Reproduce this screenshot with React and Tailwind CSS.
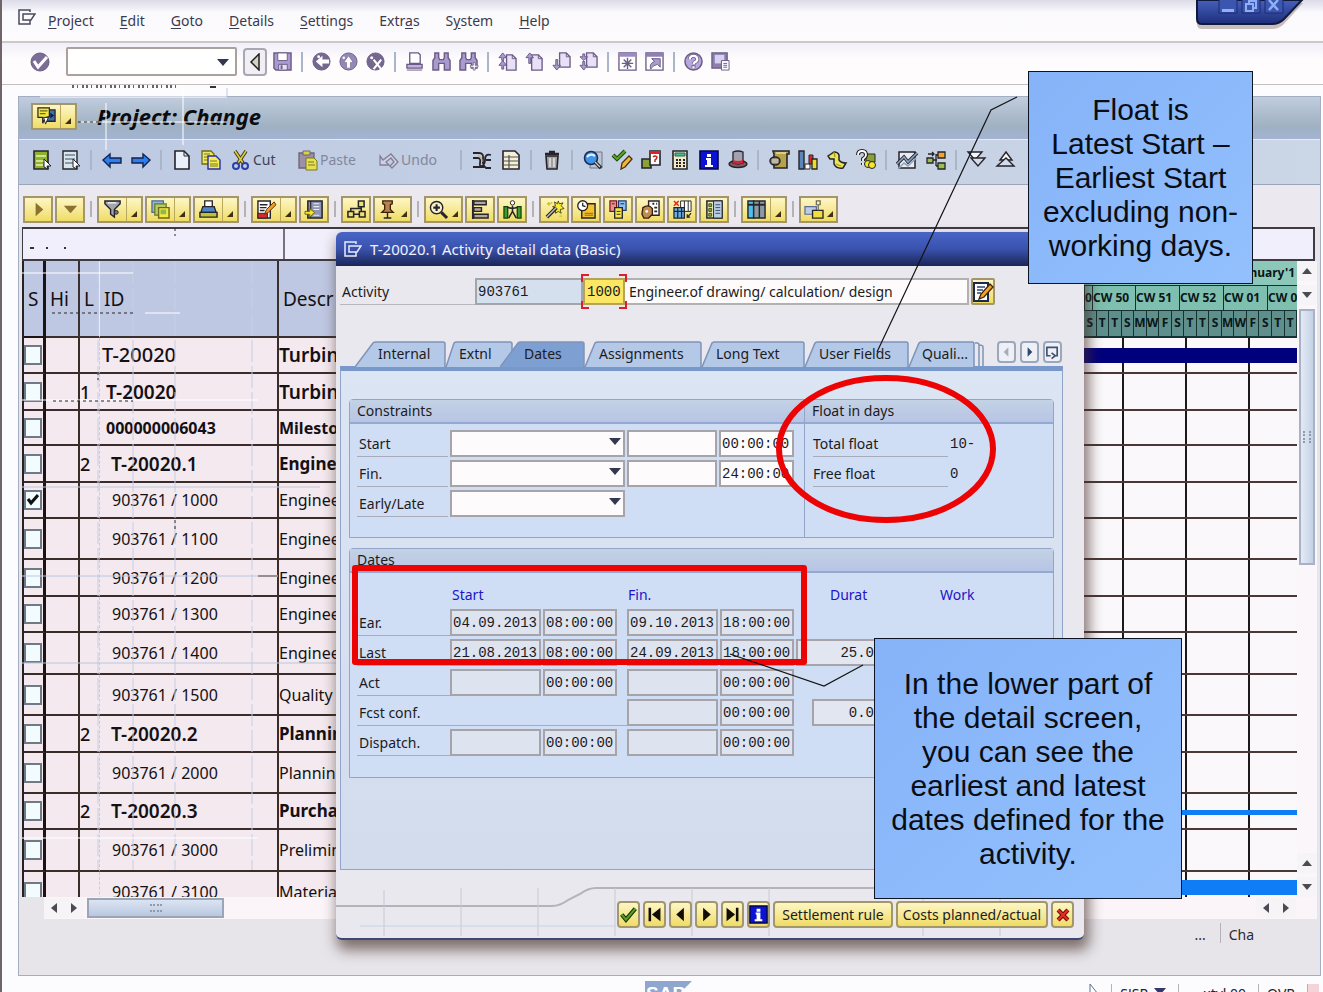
import { Fragment } from "react"

// ---------- icons ----------

const K = "#26242a"
const P = "#6b5b85"
const PL = "#bdb2e2"

const glyphs = {
  check: (
    <>
      <circle cx="10" cy="10" r="9" fill="#7b6e96" stroke={P} />
      <path d="M4 9l4 6 9-10" fill="none" stroke="#fff" strokeWidth="3" />
    </>
  ),
  save: (
    <>
      <path d="M1 1h18v18H3l-2-2z" fill="#a99bd0" stroke={P} strokeWidth="1.5" />
      <path d="M5 1h10v8H5z" fill="#fff" stroke={P} />
      <path d="M6 13h9v6H6z" fill="#e6e0f5" stroke={P} />
      <path d="M8 14h2v4H8z" fill={P} />
    </>
  ),
  back: (
    <>
      <circle cx="10" cy="10" r="9" fill="#75688f" stroke={P} />
      <path d="M18 8h-7V4l-7 6 7 6v-4h7z" fill="#fff" />
      <circle cx="7" cy="5" r="1.5" fill="#fff" />
    </>
  ),
  exit: (
    <>
      <circle cx="10" cy="10" r="9" fill="#9488b8" stroke={P} />
      <path d="M8 17v-6H5l5-7 5 7h-3v6z" fill="#fff" stroke={P} strokeWidth="0.6" />
      <circle cx="5" cy="6" r="1.3" fill="#fff" />
    </>
  ),
  cancel: (
    <>
      <circle cx="10" cy="10" r="9" fill="#75688f" stroke={P} />
      <path d="M8 8l8 10M16 8l-8 10" stroke="#fff" strokeWidth="2.2" />
      <circle cx="6" cy="6" r="1.6" fill="#fff" />
    </>
  ),
  print: (
    <>
      <path d="M5 1h9l2 2v9H5z" fill="#fff" stroke={P} strokeWidth="1.4" />
      <path d="M2 13h16v4H2z" fill={PL} stroke={P} strokeWidth="1.4" />
      <path d="M2 19h16" stroke={P} />
    </>
  ),
  find: (
    <path d="M3 1h4v5l1 2h4l1-2V1h4v5l2 3v10h-6v-7H7v7H1V9l2-3z" fill="#a99bd0" stroke={P} strokeWidth="1.5" />
  ),
  findNext: (
    <>
      <path d="M3 1h4v5l1 2h4l1-2V1h4v5l2 3v8h-6v-5H7v7H1V9l2-3z" fill="#a99bd0" stroke={P} strokeWidth="1.5" />
      <path d="M12 14h3v-3h2v3h3v2h-3v3h-2v-3h-3z" fill="#fff" stroke={P} strokeWidth="0.8" />
    </>
  ),
  firstPage: (
    <>
      <path d="M9 3h6l4 4v12H9z" fill="#e7e0f7" stroke={P} strokeWidth="1.4" />
      <path d="M15 3v4h4" fill="none" stroke={P} />
      <path d="M1 6l4-5 4 5H6v3H4V6zM1 14l4-5 4 5H6v4H4v-4z" fill="#a99bd0" stroke={P} />
    </>
  ),
  prevPage: (
    <>
      <path d="M7 3h7l4 4v12H7z" fill="#e7e0f7" stroke={P} strokeWidth="1.4" />
      <path d="M14 3v4h4" fill="none" stroke={P} />
      <path d="M1 6l4-5 4 5H6v6H4V6z" fill="#a99bd0" stroke={P} />
    </>
  ),
  nextPage: (
    <>
      <path d="M8 1h7l4 4v11H8z" fill="#e7e0f7" stroke={P} strokeWidth="1.4" />
      <path d="M15 1v4h4" fill="none" stroke={P} />
      <path d="M4 8h2v6h3l-4 5-4-5h3z" fill="#a99bd0" stroke={P} />
    </>
  ),
  lastPage: (
    <>
      <path d="M8 1h7l4 4v11H8z" fill="#e7e0f7" stroke={P} strokeWidth="1.4" />
      <path d="M15 1v4h4" fill="none" stroke={P} />
      <path d="M4 2h2v3h3L5 9 1 5h3zM4 10h2v4h3l-4 5-4-5h3z" fill="#a99bd0" stroke={P} />
    </>
  ),
  session: (
    <>
      <path d="M1 1h18v18H1z" fill="#fff" stroke={P} strokeWidth="1.4" />
      <path d="M1 1h18v4H1z" fill="#9a8cc2" />
      <path d="M10 6v12M4 12h12M6 8l8 8M14 8l-8 8" stroke={P} strokeWidth="1.5" />
    </>
  ),
  shortcut: (
    <>
      <path d="M1 1h18v18H1z" fill="#fff" stroke={P} strokeWidth="1.4" />
      <path d="M1 1h18v4H1z" fill="#8e80b4" />
      <path d="M7 7h9v9l-3-3q-5 1-7 5-2-6 4-8z" fill="#a99bd0" stroke={P} />
    </>
  ),
  help: (
    <>
      <circle cx="10" cy="10" r="9" fill="#b5a8dc" stroke={P} strokeWidth="1.6" />
      <path d="M6 8q0-4 4-4t4 4q0 2-3 3l-1 2M10 14v3" fill="none" stroke={P} strokeWidth="4" />
      <path d="M6 8q0-4 4-4t4 4q0 2-3 3l-1 2M10 15v2" fill="none" stroke="#fff" strokeWidth="2.4" />
    </>
  ),
  layout: (
    <>
      <path d="M1 1h16v16H1z" fill="#8c7fae" stroke={P} strokeWidth="1.4" />
      <path d="M4 3h10v9H4z" fill="#d8d0f0" />
      <path d="M11 9h8v10h-8z" fill="#fff" stroke={P} />
      <path d="M13 12h4M13 14h4M13 16h4" stroke={P} />
    </>
  ),
  selectAll: (
    <>
      <path d="M2 1h14v18H2z" fill="#8db32c" stroke={K} strokeWidth="1.6" />
      <path d="M4 6h10M4 11h10M4 15h7" stroke="#e9f2b4" strokeWidth="1.6" />
      <path d="M12 9l7 7h-4l1 3-4-2z" fill="#fff" stroke={K} />
    </>
  ),
  deselect: (
    <>
      <path d="M2 1h14v18H2z" fill="#d8e4ee" stroke={K} strokeWidth="1.4" />
      <path d="M4 5h10M4 9h10M4 13h8" stroke="#6f7f90" strokeWidth="1.3" />
      <path d="M12 9l7 7h-4l1 3-4-2z" fill="#fff" stroke={K} />
    </>
  ),
  left: <path d="M1 10l7-6v4h11v5H8v4z" fill="#2d7ff0" stroke="#14224e" strokeWidth="1.4" />,
  right: <path d="M19 10l-7-6v4H1v5h11v4z" fill="#2d7ff0" stroke="#14224e" strokeWidth="1.4" />,
  page: (
    <>
      <path d="M3 1h9l5 5v13H3z" fill="#eaf1fa" stroke={K} strokeWidth="1.6" />
      <path d="M12 1v5h5" fill="none" stroke={K} />
    </>
  ),
  copy: (
    <>
      <path d="M1 1h9l3 3v10H1z" fill="#ece765" stroke="#6d6a1c" strokeWidth="1.3" />
      <path d="M3 4h6M3 7h4M3 10h4" stroke="#7d7920" />
      <path d="M7 6h8l4 4v9H7z" fill="#f3ec54" stroke="#2a2fa8" strokeWidth="1.4" />
      <path d="M9 11h7M9 14h8M9 16h8" stroke="#7d7920" />
    </>
  ),
  cut: (
    <>
      <path d="M4 1l8 12M15 1L7 13" stroke="#3d3a10" strokeWidth="3.5" />
      <path d="M4 1l8 12M15 1L7 13" stroke="#e6cc3c" strokeWidth="1.6" />
      <circle cx="5" cy="16" r="3" fill="none" stroke="#2b3fa5" strokeWidth="2" />
      <circle cx="14" cy="16" r="3" fill="none" stroke="#2b3fa5" strokeWidth="2" />
    </>
  ),
  paste: (
    <>
      <path d="M1 3h15v15H1z" fill="#9c8fa8" stroke="#6e6478" strokeWidth="1.3" />
      <path d="M5 1h7v4H5z" fill="#d8d23c" stroke="#6e6478" />
      <path d="M8 8h8l3 3v9H8z" fill="#e6e04a" stroke="#77752c" />
      <path d="M10 12h6M10 15h7" stroke="#77752c" />
    </>
  ),
  undo: (
    <path d="M1 6v9h9l-3-3 5-4 3 4-4 4 2 2 6-6-7-8-8 6z" fill="#cdd2e6" stroke="#857f96" strokeWidth="1.3" />
  ),
  links: (
    <>
      <path d="M1 3h6q5 0 4 6t3 9h5M1 8h5q3 0 2 5t4 4M1 17h5q7 0 7-7t6-5M14 10h5" fill="none" stroke={K} strokeWidth="1.8" />
      <path d="M6 5q4 2 4 7" fill="none" stroke="#c8b890" strokeWidth="1.5" />
    </>
  ),
  sheet: (
    <>
      <path d="M2 1h12l4 4v14H2z" fill="#f3efd8" stroke={K} strokeWidth="1.6" />
      <path d="M2 7h16M2 11h16M2 15h16M8 5v14" stroke="#55504a" strokeWidth="1.2" />
    </>
  ),
  trash: (
    <>
      <path d="M4 6h12l-1 13H5z" fill="#a2a2a2" stroke={K} strokeWidth="1.6" />
      <path d="M8 8v9M12 8v9" stroke="#e8e8e8" strokeWidth="1.4" />
      <path d="M3 4h14M7 2h6" stroke={K} strokeWidth="2.4" />
    </>
  ),
  lens: (
    <>
      <path d="M7 2h12v16H7z" fill="#bac6d4" stroke="#6d7886" />
      <circle cx="8" cy="8" r="6.5" fill="#3f95e8" stroke="#1a2c5c" strokeWidth="1.6" />
      <path d="M4 7q3-4 8-1" fill="none" stroke="#e2f2ff" strokeWidth="2.2" />
      <path d="M12 12l6 6" stroke={K} strokeWidth="3.6" />
      <path d="M12 12l5 5" stroke="#d0d0d0" strokeWidth="1.2" />
    </>
  ),
  checkPen: (
    <>
      <path d="M1 5l4 4 8-8" fill="none" stroke="#254810" strokeWidth="4" />
      <path d="M1 5l4 4 8-8" fill="none" stroke="#58a825" strokeWidth="1.8" />
      <path d="M9 19l1-6 7-7 3 3-7 8z" fill="#f0b83a" stroke="#4c2f0a" strokeWidth="1.3" />
    </>
  ),
  question: (
    <>
      <path d="M1 9h9v9H1z" fill="#8aa23a" stroke={K} strokeWidth="1.6" />
      <path d="M9 1h10v14H9z" fill="#fff" stroke={K} strokeWidth="1.6" />
      <path d="M9 1h10v3H9z" fill="#d82424" />
      <path d="M12 7q2-2 4 0 0 2-2 3v2" fill="none" stroke="#c81e1e" strokeWidth="1.5" />
    </>
  ),
  calc: (
    <>
      <path d="M3 1h14v18H3z" fill="#f1eac4" stroke={K} strokeWidth="1.6" />
      <path d="M5 3h10v3H5z" fill="#4bb89c" stroke="#20685a" />
      <path d="M6 10h2M9 10h2M13 10h2M6 13h2M9 13h2M13 13h2M6 16h2M9 16h2M13 16h2" stroke={K} strokeWidth="1.8" />
    </>
  ),
  info: (
    <>
      <path d="M1 1h18v18H1z" fill="#0b12d6" stroke="#04064e" strokeWidth="1.6" />
      <path d="M8 4h4v3H8zM7 8h5v7h2v2H6v-2h2v-5H7z" fill="#fff" />
    </>
  ),
  hat: (
    <>
      <ellipse cx="10" cy="14" rx="9" ry="3.5" fill="#8a5560" stroke={K} strokeWidth="1.4" />
      <path d="M5 2q5-2 10 0v11q-5 2-10 0z" fill="#a3a0b0" stroke={K} strokeWidth="1.3" />
      <path d="M5 10q5 2 10 0v3q-5 2-10 0z" fill="#d8222e" />
    </>
  ),
  scroll: (
    <>
      <path d="M4 1h16v3h-2v14H5V4z" fill="#b6a24a" stroke={K} strokeWidth="1.6" />
      <path d="M7 3h10" stroke="#e9dc90" strokeWidth="1.5" />
      <ellipse cx="6" cy="11" rx="5" ry="4" fill="#8d8878" stroke={K} strokeWidth="1.5" />
      <path d="M4 9v4M6 9v4M8 9v4" stroke="#f0ead0" />
    </>
  ),
  chart: (
    <>
      <path d="M1 1h5v18H1z" fill="#5a86b8" stroke={K} strokeWidth="1.4" />
      <path d="M7 14h5v5H7z" fill="#fff" stroke={K} />
      <path d="M11 5h4v9h-4z" fill="#d82a2a" stroke={K} />
      <path d="M14 9h5v10h-5z" fill="#eddc2a" stroke={K} strokeWidth="1.3" />
    </>
  ),
  note: (
    <>
      <path d="M1 6l6-4q4 0 5 3v5q2 3 7 3l-3 5q-7 1-9-4V9H3z" fill="#ece455" stroke={K} strokeWidth="1.5" />
      <path d="M7 2l1 5M9 14l5 2" stroke="#a39a24" strokeWidth="1.3" />
    </>
  ),
  helpCoin: (
    <>
      <path d="M10 4h9v8h-9z" fill="#8aa030" stroke={K} />
      <path d="M2 5q0-4 4-4t4 4q0 2-3 4v2M7 13v2" fill="none" stroke={K} strokeWidth="4" />
      <path d="M2 5q0-4 4-4t4 4q0 2-3 4v2M7 13v2" fill="none" stroke="#fff" strokeWidth="1.8" />
      <circle cx="12" cy="14" r="3.5" fill="#f4e62c" stroke={K} />
      <circle cx="16" cy="15" r="3.5" fill="#f4e62c" stroke={K} />
    </>
  ),
  graph: (
    <>
      <path d="M2 2h16v16H2z" fill="#e8ecf2" stroke={K} strokeWidth="1.5" />
      <path d="M0 14l7-7 4 5 9-9" fill="none" stroke={K} strokeWidth="3.4" />
      <path d="M0 14l7-7 4 5 9-9M1 19l6-6 4 3 8-8" fill="none" stroke="#8ea3c4" strokeWidth="1.6" />
    </>
  ),
  tree: (
    <>
      <path d="M7 10h4M10 4v12M10 5h3M10 16h3M2 4h6M6 2l2 2-2 2" fill="none" stroke={K} strokeWidth="1.3" />
      <path d="M1 8h6v5H1z" fill="#9cc045" stroke={K} strokeWidth="1.3" />
      <path d="M12 2h7v6h-7z" fill="#f2a52e" stroke={K} strokeWidth="1.3" />
      <path d="M12 13h7v6h-7z" fill="#9cc045" stroke={K} strokeWidth="1.3" />
    </>
  ),
  downs: (
    <>
      <path d="M1 2h14L8 10z" fill="#f4f6fa" stroke={K} strokeWidth="1.4" />
      <path d="M4 8h14l-7 8z" fill="#d3dcea" stroke={K} strokeWidth="1.4" />
    </>
  ),
  ups: (
    <>
      <path d="M4 10l6-8 6 8z" fill="#f4f6fa" stroke={K} strokeWidth="1.4" />
      <path d="M1 16l9-8 8 8z" fill="#d3dcea" stroke={K} strokeWidth="1.4" />
    </>
  ),
  expand: <path d="M7 3v14l8-7z" fill="#8c7230" />,
  collapse: <path d="M3 6h14l-7 8z" fill="#8c7230" />,
  filter: (
    <>
      <path d="M2 1h16v3l-6 6v8l-4-3V10L2 4z" fill="#a3a6ae" stroke={K} strokeWidth="1.5" />
      <path d="M5 3h9" stroke="#f0f0f4" strokeWidth="1.5" />
      <circle cx="14" cy="13" r="2" fill="#777" stroke={K} />
    </>
  ),
  layers: (
    <>
      <path d="M1 1h12v12H1z" fill="#8fb6da" stroke="#4a6a8c" strokeWidth="1.3" />
      <path d="M4 4h12v12H4z" fill="#b9c86a" stroke="#6a7a24" strokeWidth="1.3" />
      <path d="M8 8h11v11H8z" fill="#f2ea42" stroke="#6f6a16" strokeWidth="1.5" />
      <path d="M10 10h6v5h-6z" fill="#90b850" />
    </>
  ),
  printer: (
    <>
      <path d="M6 1h8v7H6z" fill="#fff" stroke={K} strokeWidth="1.4" />
      <path d="M4 7h12l2 6H2z" fill="#4c86c8" stroke={K} strokeWidth="1.4" />
      <path d="M1 13h18v5H1z" fill="#b8c43c" stroke={K} strokeWidth="1.5" />
    </>
  ),
  edit: (
    <>
      <path d="M1 1h13v18H1z" fill="#fff" stroke={K} strokeWidth="1.5" />
      <path d="M3 5h8M3 8h7M3 11h5" stroke={K} strokeWidth="1.5" />
      <path d="M1 14h10v5H1z" fill="#d82a2a" stroke={K} />
      <path d="M8 15l2-5 8-8 2 3-8 8z" fill="#f09a2c" stroke="#5a3208" />
    </>
  ),
  book: (
    <>
      <path d="M3 1h15v18H3z" fill="#8d94b4" stroke={K} strokeWidth="1.6" />
      <path d="M6 1v18" stroke={K} strokeWidth="1.2" />
      <path d="M9 4h6M9 7h6M9 10h6M9 16h6" stroke="#e6e8f4" strokeWidth="1.2" />
      <path d="M0 12h5V9l5 4-5 5v-3H0z" fill="#f7e62c" stroke="#6d6410" />
    </>
  ),
  org: (
    <path d="M12 1h6v6h-6zM1 12h6v6H1zM13 12h6v6h-6zM7 15h6M15 7v5M4 12V9h11" fill="#efe070" stroke={K} strokeWidth="1.6" />
  ),
  pin: (
    <>
      <path d="M5 1h10v3l-2 1v5l3 3H4l3-3V5L5 4z" fill="#b8834a" stroke="#3e2208" strokeWidth="1.4" />
      <path d="M10 13v6M6 19h8" stroke={K} strokeWidth="1.5" />
    </>
  ),
  zoomIn: (
    <>
      <circle cx="8" cy="8" r="6.5" fill="#f6f2cc" stroke={K} strokeWidth="1.5" />
      <path d="M8 4.500v7M4.500 8h7" stroke={K} strokeWidth="2.2" />
      <path d="M13 13l6 6" stroke={K} strokeWidth="3.2" />
    </>
  ),
  gantt: (
    <>
      <path d="M2 0v20" stroke={K} strokeWidth="2" />
      <path d="M3 1h13v4H3zM3 8h8v4H3zM3 15h15v4H3z" fill="#b0a7a0" stroke={K} strokeWidth="1.5" />
    </>
  ),
  person: (
    <>
      <path d="M1 7h4v12H1zM15 7h4v12h-4z" fill="#3f9a35" stroke="#12400e" strokeWidth="1.3" />
      <circle cx="10" cy="3" r="2.3" fill="#fff" stroke={K} />
      <path d="M10 6v6l-4 7M10 12l4 7M5 8l5 1 5-1" fill="none" stroke={K} strokeWidth="1.6" />
    </>
  ),
  wand: (
    <>
      <path d="M14 1l1 3 4-1-2 3 3 3-4 1 1 4-3-2-3 2V9L8 7l3-1-1-4 3 2z" fill="#f8ee3a" stroke="#4e4a10" />
      <path d="M2 18L12 8" stroke={K} strokeWidth="3.8" />
      <path d="M2 18L12 8" stroke="#bdbdbd" strokeWidth="1.5" />
      <path d="M2 4h4M4 2v4M15 17h3M7 2v2" stroke="#d2c41a" strokeWidth="1.5" />
    </>
  ),
  clock: (
    <>
      <path d="M5 4h14v15H5z" fill="#f5c22c" stroke={K} strokeWidth="1.5" />
      <circle cx="6" cy="6" r="5.2" fill="#fff" stroke={K} strokeWidth="1.4" />
      <path d="M6 3v3l3 1" fill="none" stroke={K} strokeWidth="1.3" />
      <path d="M8 14h9M8 16h9" stroke="#8e6a10" />
    </>
  ),
  docs: (
    <>
      <path d="M1 1h7v11H1z" fill="#f08c8c" stroke="#701818" strokeWidth="1.3" />
      <path d="M10 1h8v10h-8z" fill="#8ec0f0" stroke="#1c3c78" strokeWidth="1.3" />
      <path d="M6 8h8v11H6z" fill="#f6e84a" stroke={K} strokeWidth="1.4" />
      <path d="M8 12h4M8 15h4M3 4h3M12 4h4" stroke={K} />
    </>
  ),
  face: (
    <>
      <path d="M8 1h11v15H8z" fill="#fff" stroke={K} strokeWidth="1.5" />
      <path d="M12 4h2M16 4h1M14 8h3M14 12h3" stroke={K} strokeWidth="2" />
      <path d="M2 8q6-4 10 1v6l-4 4H3l-2-4z" fill="#c08a54" stroke="#3a1e08" strokeWidth="1.4" />
      <circle cx="6" cy="12" r="1.5" fill="#fff" />
    </>
  ),
  delGrid: (
    <>
      <path d="M8 1h11v11H8z" fill="#fff" stroke={K} />
      <path d="M12 1v11M16 1v11" stroke={K} />
      <path d="M1 8h11v11H1z" fill="#6ab0e8" stroke={K} strokeWidth="1.3" />
      <path d="M5 8v11M9 8v11M1 12h11" stroke={K} strokeWidth="1.3" />
      <path d="M1 1l5 5M6 1L1 6" stroke="#e02424" strokeWidth="1.6" />
      <path d="M19 14l-4 4v-3M15 18h3" fill="none" stroke={K} strokeWidth="1.3" />
    </>
  ),
  list: (
    <>
      <path d="M2 1h16v18H2z" fill="#f1edc0" stroke={K} strokeWidth="1.6" />
      <path d="M9 1h9v18H9z" fill="#b9cfe4" stroke={K} />
      <path d="M4 4h3v3H4zM4 9h3v3H4zM4 14h3v3H4z" fill="#8faf3a" stroke="#3e4e14" />
      <path d="M11 5h5M11 8h5M11 11h5M11 14h5" stroke="#3a4a66" />
    </>
  ),
  columns: (
    <>
      <path d="M1 1h6v18H1z" fill="#4ec0f0" stroke={K} strokeWidth="1.5" />
      <path d="M7 1h6v18H7zM13 1h6v18h-6z" fill="#8d9aa2" stroke={K} strokeWidth="1.5" />
      <path d="M1 5h18" stroke={K} strokeWidth="2" />
    </>
  ),
  windows: (
    <>
      <path d="M1 7h12v8H1z" fill="#bccbe6" stroke="#5d6d94" strokeWidth="1.3" />
      <path d="M9 11h11v8H9z" fill="#efdf3e" stroke={K} strokeWidth="1.4" />
      <path d="M13 1h4v4h-4zM15 5v6" fill="none" stroke="#6d6a50" strokeWidth="1.3" />
    </>
  ),
  bubbles: (
    <>
      <path d="M9 3h10v12H9z" fill="#3f6fae" stroke={K} strokeWidth="1.4" />
      <path d="M14 6v6l4-3z" fill="#0c1c3c" />
      <path d="M1 1h12v9l-4 1-3 6V11H1z" fill="#f3e93c" stroke={K} strokeWidth="1.3" />
      <path d="M3 4h8M3 7h6" stroke="#6c6612" strokeWidth="1.3" />
      <path d="M7 11h5l-3 7z" fill="#fff" stroke={K} />
    </>
  ),
  first: <path d="M3 2h3v16H3zM17 2v16L7 10z" fill="#120e06" />,
  prev: <path d="M14 2v16L5 10z" fill="#120e06" />,
  next: <path d="M6 2v16l9-8z" fill="#120e06" />,
  last: <path d="M14 2h3v16h-3zM3 2v16l10-8z" fill="#120e06" />,
  ok: (
    <>
      <path d="M2 10l5 6L18 3" fill="none" stroke="#1d3408" strokeWidth="5" />
      <path d="M2 10l5 6L18 3" fill="none" stroke="#57a022" strokeWidth="2.4" />
    </>
  ),
  close: (
    <>
      <path d="M3 3l14 14M17 3L3 17" stroke="#5a0808" strokeWidth="6" />
      <path d="M3 3l14 14M17 3L3 17" stroke="#e62a1e" strokeWidth="3.4" />
    </>
  ),
  penDoc: (
    <>
      <path d="M1 1h14v18H1z" fill="#fff" stroke="#1b2a4a" strokeWidth="2" />
      <path d="M4 5h8M4 8h6M4 11h4" stroke="#30446e" strokeWidth="1.5" />
      <path d="M6 17l2-5 9-10 3 3-9 10z" fill="#f3a52a" stroke="#3c2206" strokeWidth="1.3" />
    </>
  ),
}

function Icon({ name, size = 20 }) {
  return (
    <svg width={size} height={size} viewBox="0 0 20 20" className="shrink-0 overflow-visible" aria-hidden="true">
      {glyphs[name]}
    </svg>
  )
}

function WindowMark({ color }) {
  return (
    <svg width="18" height="16" viewBox="0 0 18 16" className="shrink-0" aria-hidden="true">
      <path d="M12 3V1H1v14h11v-4M5 5h12l-4 6H5z" fill="none" stroke={color} strokeWidth="1.5" />
    </svg>
  )
}

// ---------- data ----------

const menus = [
  ["", "P", "roject"],
  ["", "E", "dit"],
  ["", "G", "oto"],
  ["", "D", "etails"],
  ["", "S", "ettings"],
  ["Extr", "a", "s"],
  ["S", "y", "stem"],
  ["", "H", "elp"],
]

const systemGroups = [
  ["back", "exit", "cancel"],
  ["print", "find", "findNext"],
  ["firstPage", "prevPage", "nextPage", "lastPage"],
  ["session", "shortcut"],
  ["help", "layout"],
]

const appGroups = [
  ["links", "sheet"],
  ["trash"],
  ["lens", "checkPen", "question", "calc", "info", "hat"],
  ["scroll", "chart", "note", "helpCoin"],
  ["graph", "tree"],
  ["downs", "ups"],
]

// "+" marks a button with a split menu corner, "-" one with a plain corner
const goldGroups = [
  ["expand", "collapse"],
  ["filter+", "layers+", "printer+"],
  ["edit+", "book"],
  ["org", "pin-"],
  ["zoomIn-", "gantt", "person"],
  ["wand", "clock", "docs", "face", "delGrid", "list"],
  ["columns+"],
  ["windows-"],
]

const rows = [
  { h: 36, level: "", id: "T-20020", descr: "Turbine", kind: "top" },
  { h: 37, level: "1", id: "T-20020", descr: "Turbine", kind: "wbs" },
  { h: 35, level: "", id: "000000006043", descr: "Milestone", kind: "mile" },
  { h: 37, level: "2", id: "T-20020.1", descr: "Engineering", kind: "sub" },
  { h: 36, level: "", id: "903761 / 1000", descr: "Engineering", kind: "act", checked: true },
  { h: 41, level: "", id: "903761 / 1100", descr: "Engineering", kind: "act" },
  { h: 37, level: "", id: "903761 / 1200", descr: "Engineering", kind: "act" },
  { h: 36, level: "", id: "903761 / 1300", descr: "Engineering", kind: "act" },
  { h: 42, level: "", id: "903761 / 1400", descr: "Engineering", kind: "act" },
  { h: 41, level: "", id: "903761 / 1500", descr: "Quality C", kind: "act" },
  { h: 37, level: "2", id: "T-20020.2", descr: "Planning", kind: "sub" },
  { h: 41, level: "", id: "903761 / 2000", descr: "Planning", kind: "act" },
  { h: 36, level: "2", id: "T-20020.3", descr: "Purchase", kind: "sub" },
  { h: 42, level: "", id: "903761 / 3000", descr: "Preliminary", kind: "act" },
  { h: 42, level: "", id: "903761 / 3100", descr: "Material", kind: "act" },
]

const idStyle = {
  top: "text-xl font-medium pl-0.5",
  wbs: "text-[19px] font-semibold pl-1.5",
  mile: "text-base font-bold pl-1.5",
  sub: "text-[19px] font-semibold pl-[11px]",
  act: "text-base pl-3",
}

const descrStyle = {
  top: "text-[19px] font-semibold",
  wbs: "text-[19px] font-semibold",
  mile: "text-base font-bold",
  sub: "text-[17px] font-bold",
  act: "text-base",
}

const bars = {
  0: "mt-2.5 h-[15px] bg-[#00007c]",
  12: "mt-4 h-[5px] bg-[#0f7ef6]",
  14: "mt-2 h-[15px] bg-[#0f7ef6]",
}

const weeks = [
  ["w-2", "0"],
  ["w-[43px]", "CW 50"],
  ["w-11", "CW 51"],
  ["w-11", "CW 52"],
  ["w-11", "CW 01"],
  ["flex-1", "CW 0"],
]

const tabs = [
  { label: "Internal", w: 91, slant: 20, pl: "pl-[23px]", gap: "ml-[15px]" },
  { label: "Extnl", w: 67, slant: 10, pl: "pl-[13px]", gap: "" },
  { label: "Dates", w: 85, slant: 20, pl: "pl-6", gap: "-ml-[13px]", active: true },
  { label: "Assignments", w: 117, slant: 12, pl: "pl-3.5", gap: "" },
  { label: "Long Text", w: 103, slant: 12, pl: "pl-3.5", gap: "" },
  { label: "User Fields", w: 104, slant: 12, pl: "pl-3.5", gap: "" },
  { label: "Quali...", w: 66, slant: 12, pl: "pl-[13px]", gap: "" },
]

const dateRows = [
  { label: "Ear.", start: "04.09.2013", startTime: "08:00:00", fin: "09.10.2013", finTime: "18:00:00" },
  { label: "Last", start: "21.08.2013", startTime: "08:00:00", fin: "24.09.2013", finTime: "18:00:00", durat: "25.0", wide: true },
  { label: "Act", start: "", startTime: "00:00:00", fin: "", finTime: "00:00:00" },
  { label: "Fcst conf.", fin: "", finTime: "00:00:00", durat: "0.0" },
  { label: "Dispatch.", start: "", startTime: "00:00:00", fin: "", finTime: "00:00:00" },
]

// ---------- main window ----------

function Divider() {
  return <span className="mx-[5px] h-5 w-0.5 shrink-0 bg-[#a9b6ca]" />
}

function MenuBar() {
  return (
    <nav className="flex h-[43px] shrink-0 items-center gap-[26px] border-b-2 border-[#cbc8ca] bg-linear-to-b from-[#dcdbe9] via-[#faf9fc] via-30% to-[#fdfbfc] pl-[18px] text-[#3b3a4e]">
      <span className="-mr-3.5 mb-2">
        <WindowMark color="#4b4960" />
      </span>
      {menus.map(([before, key, after]) => (
        <button key={before + key + after} type="button" className="text-sm">
          {before}
          <span className="underline underline-offset-2">{key}</span>
          {after}
        </button>
      ))}
    </nav>
  )
}

function WindowControls() {
  return (
    <svg className="absolute top-0 right-[18px] h-[34px] w-[112px]" viewBox="0 0 112 34" aria-hidden="true">
      <defs>
        <linearGradient id="ctl" x1="0" y1="0" x2="0" y2="1">
          <stop offset="0" stopColor="#4560bd" />
          <stop offset="1" stopColor="#1e2e7a" />
        </linearGradient>
      </defs>
      <path d="M4 0v21q0 5 5 5h70q7 0 12-5L110 0z" fill="#6a4d48" opacity="0.35" transform="translate(0 3)" />
      <path d="M4 0v19q0 5 5 5h70q7 0 12-5L109 0z" fill="url(#ctl)" stroke="#111a3c" strokeWidth="2" />
      <path d="M26 0v13h18V0M49 0v13h18V0M72 0v13h18V0" fill="#3c55ae" stroke="#1b2a6c" />
      <path d="M29 9h12v3H29z" fill="#8fb0f6" />
      <path d="M53 4h7v7h-7zM56 4V1h7v7h-3" fill="none" stroke="#8fb0f6" strokeWidth="2" />
      <path d="M76 0l9 10M85 0l-9 10" stroke="#8fb0f6" strokeWidth="2.5" />
    </svg>
  )
}

function SystemToolbar() {
  return (
    <div className="flex h-[42px] shrink-0 items-center border-b border-[#c4c0be] bg-linear-to-b from-[#f1eff9] to-[#fefcfd] to-40% pr-4 pb-1 pl-[30px]">
      <button type="button" aria-label="Enter" className="mr-4 flex">
        <Icon name="check" />
      </button>
      <div className="relative">
        <input
          aria-label="Command"
          className="h-[29px] w-[171px] rounded-xs border-2 border-[#a8a19d] bg-white px-2 text-sm"
        />
        <svg width="12" height="7" viewBox="0 0 12 7" className="absolute top-3 right-2" aria-hidden="true">
          <path d="M0 0h12L6 7z" fill="#34384e" />
        </svg>
      </div>
      <button type="button" aria-label="Hide field" className="mr-1.5 ml-1.5 flex h-7 w-6 items-center justify-center rounded-sm border-2 border-[#a9a6b6] bg-[#f0eff4]">
        <svg width="12" height="18" viewBox="0 0 12 18" aria-hidden="true">
          <path d="M10 1v16L2 9z" fill="#d5d2c6" stroke="#222" strokeWidth="1.5" />
        </svg>
      </button>
      <button type="button" aria-label="Save" className="mr-1 flex">
        <Icon name="save" size={19} />
      </button>
      {systemGroups.map((group) => (
        <Fragment key={group[0]}>
          <Divider />
          {group.map((name) => (
            <button key={name} type="button" aria-label={name} className="flex w-[27px] justify-center">
              <Icon name={name} size={19} />
            </button>
          ))}
        </Fragment>
      ))}
    </div>
  )
}

function AppToolbar() {
  return (
    <div className="flex h-[46px] shrink-0 items-center overflow-hidden border-t border-b border-t-[#e4ebf4] border-b-[#9aa6b8] bg-linear-to-r from-[#bdcae2] to-[#cbd6e6] pb-1 pl-2 text-sm text-[#3c4356]">
      {[["selectAll", "deselect"], ["left", "right"], ["page", "copy"]].map((group, i) => (
        <Fragment key={group[0]}>
          {i > 0 && <Divider />}
          {group.map((name) => (
            <button key={name} type="button" aria-label={name} className="flex w-[29px] shrink-0 justify-center">
              <Icon name={name} />
            </button>
          ))}
        </Fragment>
      ))}
      <button type="button" className="ml-1.5 flex w-[67px] shrink-0 items-center gap-0.5">
        <Icon name="cut" /> Cut
      </button>
      <button type="button" className="flex w-[81px] shrink-0 items-center gap-0.5 text-[#82889c]">
        <Icon name="paste" /> Paste
      </button>
      <button type="button" className="flex w-[76px] shrink-0 items-center gap-0.5 text-[#82889c]">
        <Icon name="undo" /> Undo
      </button>
      {appGroups.map((group) => (
        <Fragment key={group[0]}>
          <Divider />
          {group.map((name) => (
            <button key={name} type="button" aria-label={name} className="flex w-[29px] shrink-0 justify-center">
              <Icon name={name} />
            </button>
          ))}
        </Fragment>
      ))}
    </div>
  )
}

const gold = "border-2 border-[#a3966a] bg-linear-to-b from-[#fdf6c4] to-[#f0dc62]"

function GoldButton({ spec }) {
  const name = spec.replace(/[+-]/, "")
  const menu = /[+-]/.test(spec)
  const size = spec.endsWith("+") ? "w-[46px]" : spec.endsWith("-") ? "w-[39px]" : "w-[30px]"
  return (
    <button type="button" aria-label={name} className={`flex h-[27px] shrink-0 items-center justify-center gap-1 ${gold} ${size}`}>
      <Icon name={name} size={19} />
      {spec.endsWith("+") && <span className="h-full w-px bg-[#b9a95c]" />}
      {menu && (
        <svg width="6" height="6" viewBox="0 0 6 6" className="mb-1 shrink-0 self-end" aria-hidden="true">
          <path d="M6 0v6H0z" fill="#3e2f14" />
        </svg>
      )}
    </button>
  )
}

function GoldToolbar() {
  return (
    <div className="flex h-[42px] shrink-0 items-center gap-0.5 overflow-hidden bg-[#ebe9ef] pt-1.5 pl-1">
      {goldGroups.map((group, i) => (
        <Fragment key={group[0]}>
          {i > 0 && (
            <span className="flex w-2 shrink-0 justify-center">
              <span className="h-4 w-0.5 bg-[#b4b2b8]" />
            </span>
          )}
          {group.map((spec) => (
            <GoldButton key={spec} spec={spec} />
          ))}
        </Fragment>
      ))}
    </div>
  )
}

function ProjectTable() {
  return (
    <table className="w-full table-fixed border-separate border-spacing-0 border-l-2 border-[#2a2222] text-left text-[#141014]">
      <colgroup>
        <col className="w-[22px]" />
        <col className="w-[34px]" />
        <col className="w-5" />
        <col className="w-[179px]" />
        <col />
      </colgroup>
      <thead>
        <tr className="h-[77px] bg-[#bfc8e3] text-[19px] leading-6">
          <th className="border-r-3 border-b-2 border-[#1c1414] pl-1 font-normal">S</th>
          <th className="border-r-2 border-b-2 border-[#3a3030] pl-1 font-normal">Hi</th>
          <th className="border-r border-b-2 border-r-[#e8ecfa] border-b-[#3a3030] pl-1 font-normal">L</th>
          <th className="border-r-2 border-b-2 border-[#3a3030] pl-1 font-normal">ID</th>
          <th className="border-b-2 border-[#3a3030] pl-1 font-normal">Descr</th>
        </tr>
      </thead>
      <tbody>
        {rows.map((row, i) => (
          <tr key={i} className="bg-[#f3e9ee] leading-6" style={{ height: row.h }}>
            <td className="border-r-3 border-b-2 border-[#1c1414] border-b-[#3a2c2a] p-0">
              <span className="relative flex">
                <input
                  type="checkbox"
                  aria-label={row.id}
                  defaultChecked={row.checked}
                  className="peer h-5 w-[18px] appearance-none border-2 border-[#6f7a86] bg-[#f2fbfe]"
                />
                <svg viewBox="0 0 12 12" className="pointer-events-none absolute top-1 left-[3px] hidden h-3 w-3 peer-checked:block" aria-hidden="true">
                  <path d="M1 5l3 4 7-8" fill="none" stroke="#111" strokeWidth="3" />
                </svg>
              </span>
            </td>
            <td className="border-r-2 border-b-2 border-[#3a2c2a] p-0" />
            <td className="border-r border-b-2 border-dashed border-r-[#c4cbe2] border-b-[#3a2c2a] p-0 text-lg font-medium [border-bottom-style:solid]">
              {row.level}
            </td>
            <td className={`border-r-2 border-b-2 border-[#3a2c2a] py-0 pr-0 whitespace-nowrap ${idStyle[row.kind]}`}>{row.id}</td>
            <td className={`overflow-hidden border-b-2 border-[#3a2c2a] p-0 whitespace-nowrap ${descrStyle[row.kind]}`}>{row.descr}</td>
          </tr>
        ))}
      </tbody>
    </table>
  )
}

function Timeline() {
  return (
    <div className="flex w-[213px] shrink-0 flex-col overflow-hidden bg-[#fbf8fb] text-xs font-bold text-[#0c1616]">
      <div className="flex h-6 shrink-0 items-center justify-end bg-[#8cc8b9] pr-0.5">January&apos;1</div>
      <div className="flex h-[26px] shrink-0 items-center border-y border-[#143230] bg-[#7fbfb0]">
        {weeks.map(([w, label]) => (
          <span key={label} className={`h-full shrink-0 overflow-hidden border-l border-[#143230] leading-6 whitespace-nowrap ${w}`}>
            {label}
          </span>
        ))}
      </div>
      <div className="flex h-[27px] shrink-0 border-b-2 border-[#143230] bg-[#5f8f8d]">
        {"STTSMWFSTTSMWFSTT".split("").map((day, i) => (
          <span key={i} className="flex-1 overflow-hidden border-r border-[#143230] text-center leading-6">
            {day}
          </span>
        ))}
      </div>
      {rows.map((row, i) => (
        <div key={i} className="relative grid shrink-0 grid-cols-[40px_63px_63px_1fr] border-b-2 border-[#4a3838]" style={{ height: row.h }}>
          <span className="border-r-2 border-[#1e1818]" />
          <span className="border-r-2 border-[#1e1818]" />
          <span className="border-r-2 border-[#1e1818]" />
          <span />
          {bars[i] && <span className={`absolute inset-x-0 top-0 ${bars[i]}`} />}
        </div>
      ))}
    </div>
  )
}

function Arrow({ d }) {
  return (
    <svg width="12" height="12" viewBox="0 0 12 12" aria-hidden="true">
      <path d={d} fill="#4c4a52" />
    </svg>
  )
}

const up = "M1 9h10L6 3z"
const down = "M1 3h10l-5 6z"
const toLeft = "M9 1v10L3 6z"
const toRight = "M3 1v10l6-5z"

function ScrollButton({ label, d }) {
  return (
    <button type="button" aria-label={label} className="flex h-5 w-5 shrink-0 items-center justify-center bg-[#f7f4f8]">
      <Arrow d={d} />
    </button>
  )
}

function VerticalScroll() {
  return (
    <div className="flex w-5 shrink-0 flex-col items-center gap-1 bg-[#fbf6fa]">
      <ScrollButton label="Scroll up" d={up} />
      <ScrollButton label="Scroll down" d={down} />
      <div className="flex h-[256px] w-4 items-center justify-center border-2 border-[#a8b2c4] bg-linear-to-r from-[#e4eaf4] to-[#c4d2e6]">
        <span className="h-3 w-2 border-x-2 border-dotted border-[#8e9ab0]" />
      </div>
      <div className="mt-auto flex flex-col gap-1">
        <ScrollButton label="Page up" d={up} />
        <ScrollButton label="Page down" d={down} />
      </div>
    </div>
  )
}

// faint broken rules that run through the header and the grid
function GridTraces() {
  return (
    <svg className="pointer-events-none absolute top-[85px] left-0 h-[815px] w-[336px]" viewBox="0 85 336 815" aria-hidden="true">
      <g stroke="#c6cee6" fill="none" strokeDasharray="22 4">
        <path d="M98 262V870M133 262V870M175 262V870M252 262V870" />
      </g>
      <g stroke="#fff" fill="none">
        <path d="M106 103V150M183 85V145M22 273H133M145 313H180M40 97H227M80 122H227M22 400H258M22 838H258" />
      </g>
      <g stroke="#bcc8e0" fill="none">
        <path d="M22 576H258M22 663H336M22 487H320M227 88V105" />
      </g>
      <g stroke="#2a2426" fill="none" strokeDasharray="3 3">
        <path d="M52 313H133M53 401H133M98 372V380M175 520V530M78 122H100M175 228V236" />
        <path d="M72 86H180" strokeDasharray="2 3 1 4 2 2" strokeWidth="4" opacity="0.7" />
      </g>
      <path d="M30 248H34M46 248H48M64 248H66M210 87H216" stroke="#333" strokeWidth="2" />
      <path d="M258 576H278" stroke="#9a8c90" strokeWidth="2" />
    </svg>
  )
}

// ---------- activity dialog ----------

const mono = "font-['Liberation_Mono',monospace] text-sm text-[#1c1a1e]"

function Field({ label, value, className }) {
  return (
    <input
      aria-label={label}
      defaultValue={value}
      className={`h-[27px] min-w-0 shrink-0 border-2 border-[#a6a4a8] px-px ${mono} ${className}`}
    />
  )
}

function Tab({ label, w, slant, pl, gap, active }) {
  return (
    <button
      type="button"
      role="tab"
      aria-selected={!!active}
      className={`relative h-[26px] shrink-0 text-left whitespace-nowrap ${gap} ${pl}`}
      style={{ width: w }}
    >
      <svg className="absolute inset-0 h-full w-full" viewBox={`0 0 ${w} 26`} aria-hidden="true">
        <path
          d={`M0 26L${slant - 2} 2q1-1 3-1H${w - 3}q2 0 2 2V26`}
          fill={active ? "#7e9fd2" : "#b4c9e8"}
          stroke="#7f93b8"
          strokeWidth="1.5"
        />
      </svg>
      <span className="relative">{label}</span>
    </button>
  )
}

function ConstraintRow({ label, time }) {
  const id = `con-${label}`
  return (
    <div className="flex h-[27px] gap-0.5">
      <label htmlFor={id} className="w-[91px] shrink-0 border-b border-[#a7abba] pl-0.5 leading-7">{label}</label>
      <div className="relative">
        <select id={id} className="h-[27px] w-[175px] appearance-none border-2 border-[#a6a4a8] bg-[#fdfbfc] px-1">
          <option> </option>
        </select>
        <svg width="12" height="7" viewBox="0 0 12 7" className="pointer-events-none absolute top-2 right-1" aria-hidden="true">
          <path d="M0 0h12L6 7z" fill="#34384e" />
        </svg>
      </div>
      {time && (
        <>
          <Field label={`${label} date`} value="" className="w-[90px] bg-[#fdfbfc]" />
          <Field label={`${label} time`} value={time} className="w-[75px] bg-[#fdfbfc]" />
        </>
      )}
    </div>
  )
}

function DateRow({ row }) {
  const id = `date-${row.label}`
  const hasStart = row.start !== undefined
  return (
    <div className="flex h-[27px]">
      <label htmlFor={id} className={`shrink-0 border-b border-[#a7abba] pl-0.5 leading-7 ${hasStart ? "w-[93px]" : "w-[270px]"}`}>
        {row.label}
      </label>
      {hasStart && (
        <>
          <input id={id} defaultValue={row.start} className={`h-[27px] w-[91px] shrink-0 border-2 border-[#a6a4a8] bg-[#dde3ef] px-px ${mono}`} />
          <Field label={`${row.label} start time`} value={row.startTime} className="mr-2.5 ml-0.5 w-[74px] bg-[#dde3ef]" />
        </>
      )}
      <input
        id={hasStart ? undefined : id}
        aria-label={`${row.label} finish`}
        defaultValue={row.fin}
        className={`h-[27px] w-[91px] shrink-0 border-2 border-[#a6a4a8] bg-[#dde3ef] px-px ${mono}`}
      />
      <Field label={`${row.label} finish time`} value={row.finTime} className="ml-0.5 w-[74px] bg-[#dde3ef]" />
      {row.durat && (
        <Field
          label={`${row.label} duration`}
          value={row.durat}
          className={`bg-[#e2e6f0] text-right ${row.wide ? "ml-0.5 w-[81px]" : "ml-[18px] w-[65px]"}`}
        />
      )}
    </div>
  )
}

const groupHead = "flex h-6 shrink-0 items-center border-b-2 border-[#94a9cf] bg-linear-to-b from-[#c3d2e4] to-[#b8c4e6]"

function ActivityDialog() {
  return (
    <section
      role="dialog"
      aria-label="Activity detail data"
      className="absolute top-[232px] left-[336px] flex h-[708px] w-[748px] flex-col rounded-md border-b-2 border-[#3d4876] bg-[#e9e8ee] text-sm leading-5 text-[#1d1b22] shadow-[3px_8px_14px_2px_rgba(70,48,42,0.65)]"
    >
      <header className="flex h-[34px] shrink-0 items-center gap-2 rounded-t-md bg-linear-to-b from-[#4965c6] via-[#3a52ae] to-[#1a2658] pl-2 text-[15px] text-[#f0f2fb]">
        <WindowMark color="#e8ecfa" />
        <h2>T-20020.1 Activity detail data (Basic)</h2>
      </header>

      <div className="mt-3 ml-1 flex h-[27px] shrink-0 items-stretch">
        <label htmlFor="activity" className="w-[135px] border-b border-[#b9b6bd] pl-0.5 leading-7">Activity</label>
        <Field label="Network" value="903761" className="w-[108px] bg-[#d5e0ef]" />
        <div className="relative">
          <input id="activity" defaultValue="1000" className={`h-[27px] w-[42px] border-2 border-[#b5a458] bg-[#fbe763] px-0.5 ${mono}`} />
          <svg className="pointer-events-none absolute -top-1 -left-0.5 h-[35px] w-[46px]" viewBox="0 0 46 35" aria-hidden="true">
            <path d="M8 1H1v7M1 27v7h7M38 1h7v7M45 27v7h-7" fill="none" stroke="#dc1f2c" strokeWidth="2" />
          </svg>
        </div>
        <input
          aria-label="Activity description"
          defaultValue="Engineer.of drawing/ calculation/ design"
          className="h-[27px] w-[344px] border-2 border-l-0 border-[#b3b0b2] bg-[#fdfbfb] pl-1"
        />
        <button type="button" aria-label="Long text" className={`ml-0.5 flex w-6 items-center justify-center rounded-xs ${gold}`}>
          <Icon name="penDoc" />
        </button>
      </div>

      <div role="tablist" className="mt-9 ml-1 flex h-[25px] shrink-0 items-start">
        {tabs.map((tab) => (
          <Tab key={tab.label} {...tab} />
        ))}
        <svg className="h-[26px] w-2.5" viewBox="0 0 10 26" aria-hidden="true">
          <path d="M0 2h2q2 0 2 2v22M4 4q4 0 4 2v20" fill="none" stroke="#7f93b8" strokeWidth="1.5" />
        </svg>
        <div className="ml-3 flex gap-1">
          {["M12 5v10l-5-5z", "M8 5v10l5-5z", "M8 14H4V5h11v9h-3M9 11l4 3-4 3"].map((d, i) => (
            <button key={d} type="button" aria-label="Tab navigation" className="flex h-[22px] w-[19px] items-center justify-center rounded-sm border-2 border-[#9aa7bd] bg-[#eef0f5]">
              <svg width="16" height="18" viewBox="2 1 16 18" aria-hidden="true">
                <path d={d} fill={i === 2 ? "none" : i === 0 ? "#a5adbf" : "#2b466f"} stroke={i === 2 ? "#3f5474" : "none"} strokeWidth="1.8" />
              </svg>
            </button>
          ))}
        </div>
      </div>

      <div className="mr-[21px] ml-1 flex h-[504px] shrink-0 flex-col gap-2.5 border border-t-5 border-[#8fa4ca] border-t-[#7898cb] bg-linear-to-b from-[#dbe5f3] to-[#d2dced] px-2 pt-[28px]">
        <div className="flex h-[139px] shrink-0 rounded-t-sm border border-[#92a5c8] bg-[#cfdef4]">
          <fieldset aria-label="Constraints" className="flex w-[455px] flex-col border-r border-[#92a5c8]">
            <h3 className={`${groupHead} pl-[7px]`}>Constraints</h3>
            <div className="flex flex-col gap-[3px] pt-1.5 pl-[7px]">
              <ConstraintRow label="Start" time="00:00:00" />
              <ConstraintRow label="Fin." time="24:00:00" />
              <ConstraintRow label="Early/Late" />
            </div>
          </fieldset>
          <div className="flex flex-1 flex-col">
            <h3 className={`${groupHead} pl-[7px]`}>Float in days</h3>
            <dl className="grid grid-cols-[135px_1fr] gap-y-[3px] pt-1.5 pl-2 [&>*]:h-[27px] [&>*]:leading-7">
              <dt className="border-b border-[#a7abba]">Total float</dt>
              <dd className={`${mono} pl-0.5`}>10-</dd>
              <dt className="border-b border-[#a7abba]">Free float</dt>
              <dd className={`${mono} pl-0.5`}>0</dd>
            </dl>
          </div>
        </div>

        <fieldset aria-label="Dates" className="flex h-[230px] shrink-0 flex-col rounded-t-sm border border-[#92a5c8] bg-[#cfdef4]">
          <h3 className={`${groupHead} pl-[7px]`}>Dates</h3>
          <div className="grid grid-cols-[93px_176px_202px_110px_1fr] pt-3 pl-[9px] text-[#2014c8]">
            <span />
            <span>Start</span>
            <span>Fin.</span>
            <span>Durat</span>
            <span>Work</span>
          </div>
          <div className="flex flex-col gap-[3px] pt-1 pl-[7px]">
            {dateRows.map((row) => (
              <DateRow key={row.label} row={row} />
            ))}
          </div>
        </fieldset>
      </div>

      <footer className="relative flex flex-1 items-start justify-end gap-[3px] pt-[31px] pr-2.5">
        <svg className="absolute inset-0 h-full w-full" viewBox="0 0 748 68" preserveAspectRatio="none" aria-hidden="true">
          <path d="M0 36H216q8 0 16-6l12-6q8-6 16-6H748" fill="none" stroke="#b4b3b8" strokeWidth="2" />
          <path d="M48 20V66M125 18V66M202 18V66M279 18V66M356 18V66M433 18V66M587 18V66M664 18V66" stroke="#c6cad6" />
          <path d="M24 56H280" stroke="#c3d3ea" />
        </svg>
        {["ok", "first", "prev", "next", "last"].map((name) => (
          <button key={name} type="button" aria-label={name} className={`relative flex h-[27px] w-[23px] items-center justify-center rounded-sm ${gold}`}>
            <Icon name={name} size={17} />
          </button>
        ))}
        <button type="button" aria-label="Information" className={`relative flex h-[27px] w-[23px] items-center justify-center rounded-sm ${gold}`}>
          <Icon name="info" size={19} />
        </button>
        <button type="button" className={`relative h-[27px] w-[120px] rounded-sm whitespace-nowrap ${gold}`}>Settlement rule</button>
        <button type="button" className={`relative h-[27px] w-[152px] rounded-sm whitespace-nowrap ${gold}`}>Costs planned/actual</button>
        <button type="button" aria-label="Cancel" className={`relative flex h-[27px] w-[23px] items-center justify-center rounded-sm ${gold}`}>
          <Icon name="close" size={14} />
        </button>
      </footer>
    </section>
  )
}

// ---------- annotations ----------

const callout =
  "absolute flex items-center justify-center border border-[#0c1424] bg-linear-to-br from-[#86b3f8] to-[#93c0fd] text-center font-['Liberation_Sans',Arial,sans-serif] text-3xl leading-[34px] text-[#0a0d14]"

function Annotations() {
  return (
    <>
      <div className={`${callout} top-[71px] left-[1028px] h-[213px] w-[225px]`}>
        <p>
          Float is
          <br />
          Latest Start –
          <br />
          Earliest Start
          <br />
          excluding non-
          <br />
          working days.
        </p>
      </div>
      <div className={`${callout} top-[638px] left-[874px] h-[261px] w-[308px]`}>
        <p>
          In the lower part of
          <br />
          the detail screen,
          <br />
          you can see the
          <br />
          earliest and latest
          <br />
          dates defined for the
          <br />
          activity.
        </p>
      </div>
      <svg className="pointer-events-none absolute top-0 left-0 h-[992px] w-[1323px]" viewBox="0 0 1323 992" aria-hidden="true">
        <ellipse cx="886" cy="449" rx="107" ry="71" fill="none" stroke="#ec0404" strokeWidth="6" />
        <rect x="355" y="568" width="449" height="94" fill="none" stroke="#ec0404" strokeWidth="6" strokeLinejoin="round" />
        <path d="M1017 97L991 110L877 352M863 665L824 686L730 654" fill="none" stroke="#141414" strokeWidth="1.2" />
      </svg>
    </>
  )
}

export default function App() {
  return (
    <div className="relative flex h-screen flex-col overflow-hidden bg-[#fcfbfd] font-['Noto_Sans',sans-serif]">
      <MenuBar />
      <WindowControls />
      <SystemToolbar />

      <main className="mt-[11px] mr-0.5 ml-[18px] flex min-h-0 flex-1 flex-col border border-[#a4aec2] bg-[#e7e5ea]">
        <div className="flex h-[42px] shrink-0 items-center gap-5 bg-linear-to-b from-[#c0cddf] via-[#9fb1c2] via-70% to-[#a3b3d2] pb-1 pl-3">
          <button type="button" aria-label="Services" className={`flex h-[27px] w-[46px] items-center justify-center gap-1 ${gold}`}>
            <Icon name="bubbles" size={19} />
            <span className="h-full w-px bg-[#b9a95c]" />
            <svg width="6" height="6" viewBox="0 0 6 6" className="mb-1 self-end" aria-hidden="true">
              <path d="M6 0v6H0z" fill="#3e2f14" />
            </svg>
          </button>
          <h1 className="text-[22px] leading-7 font-bold text-[#0c0c10] italic">Project: Change</h1>
        </div>
        <AppToolbar />
        <GoldToolbar />

        <div className="mr-[5px] ml-[3px] flex h-[34px] shrink-0 border-y-2 border-r-2 border-l border-[#3f3b42] bg-[#f1effb]">
          <span className="w-[262px] border-r-2 border-[#77727c]" />
        </div>
        <div className="mr-[3px] ml-[3px] flex min-h-0 flex-1">
          <div className="min-w-0 flex-1 overflow-hidden">
            <ProjectTable />
          </div>
          <Timeline />
          <VerticalScroll />
        </div>

        <div className="mr-[3px] ml-[25px] flex h-[22px] shrink-0 items-center bg-[#fbf5f9] pr-[21px]">
          <ScrollButton label="Scroll left" d={toLeft} />
          <ScrollButton label="Scroll right" d={toRight} />
          <div className="ml-[3px] flex h-5 w-[137px] items-center justify-center border-2 border-[#9aa5b8] bg-linear-to-b from-[#dce4f1] to-[#b9c8e0]">
            <span className="h-2 w-3 border-y-2 border-dotted border-[#8e9ab0]" />
          </div>
          <span className="flex-1" />
          <ScrollButton label="Timeline left" d={toLeft} />
          <ScrollButton label="Timeline right" d={toRight} />
        </div>
        <div className="flex h-14 shrink-0 items-start justify-end gap-3.5 pt-1 pr-[66px] text-sm text-[#2c2a30]">
          <span className="leading-6">...</span>
          <span className="h-5 border-l border-[#b4b2b8] pl-2 leading-6">Cha</span>
        </div>
      </main>

      <footer className="flex h-4 shrink-0 items-start justify-end gap-3 overflow-hidden pt-2 pr-1 text-sm leading-5 text-[#24222a]">
        <svg width="48" height="24" viewBox="0 0 48 24" className="absolute bottom-[-13px] left-[645px]" role="img" aria-label="SAP">
          <path d="M0 0h47L23 24H0z" fill="#8fa6cf" />
          <text x="1" y="19" fontSize="19" fontWeight="700" fill="#fff" fontFamily="Liberation Sans, Arial, sans-serif">SAP</text>
        </svg>
        <svg width="10" height="14" viewBox="0 0 10 14" aria-hidden="true">
          <path d="M1 0v13l8-3z" fill="#fff" stroke="#5d6f98" />
        </svg>
        <span className="flex gap-1.5 border-l border-[#b4b2b8] pl-2">
          SJSR
          <svg width="12" height="7" viewBox="0 0 12 7" className="mt-1" aria-hidden="true">
            <path d="M0 0h12L6 7z" fill="#34386a" />
          </svg>
        </span>
        <span className="border-l border-[#b4b2b8] pl-6">xtvl 00</span>
        <span className="border-l border-[#b4b2b8] pl-2">OVR</span>
        <span className="h-4 w-3 border-l border-[#b4b2b8] bg-[#f3d5d9]" />
      </footer>

      <GridTraces />
      <span className="absolute inset-y-0 left-0 w-0.5 bg-[#6f6568]" />
      <ActivityDialog />
      <Annotations />
    </div>
  )
}
